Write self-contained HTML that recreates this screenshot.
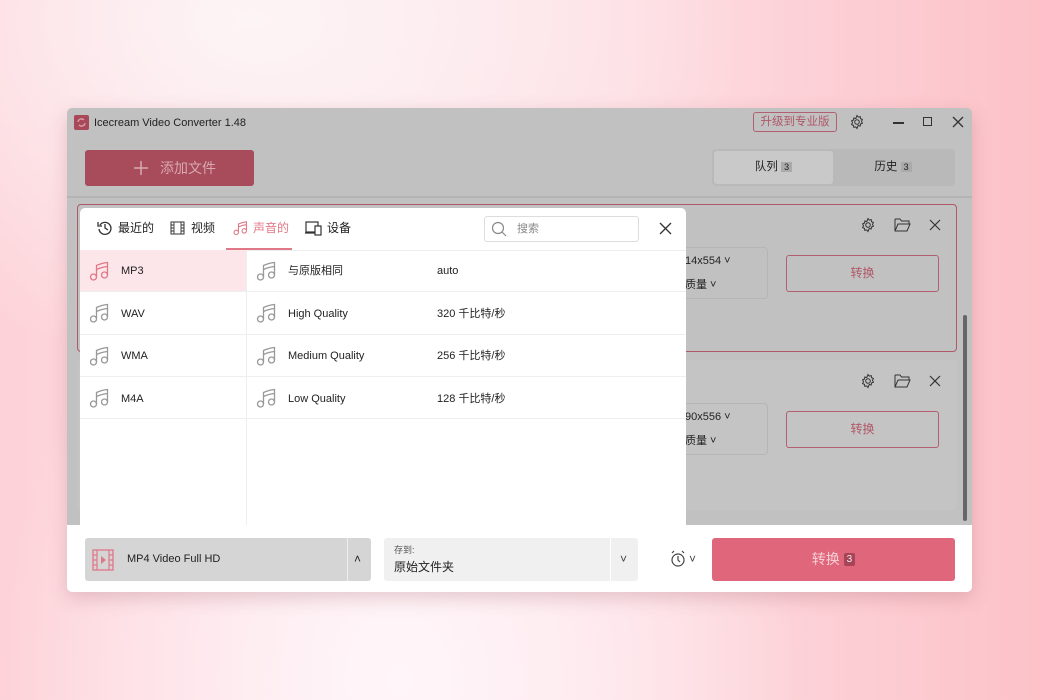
<!DOCTYPE html>
<html><head><meta charset="utf-8"><style>
*{margin:0;padding:0;box-sizing:border-box}
body{width:1040px;height:700px;overflow:hidden;position:relative;font-family:"Liberation Sans","Noto Sans CJK SC",sans-serif;font-size:11px;color:#222;
background:radial-gradient(ellipse 400px 500px at 400px 680px,#fff6fa 0%,rgba(255,246,250,0) 100%),radial-gradient(ellipse 500px 350px at 250px 20px,#fdf4f6 0%,rgba(253,244,246,0) 100%),linear-gradient(90deg,#fdd2d8 0%,#fde4e8 35%,#fddde2 60%,#fcc2c8 100%);}
.a{position:absolute}
.win{left:67px;top:108px;width:905px;height:484px;background:#c1c1c1;border-radius:5px;overflow:hidden;box-shadow:0 6px 18px rgba(150,80,90,.25)}
svg{display:block}
.row{position:absolute;height:42px;border-bottom:1px solid #eee}
.t{position:absolute;height:42px;line-height:42px;font-size:11px;white-space:nowrap}
</style></head><body>
<div class="a win">
 <div class="a" style="left:7px;top:7px;width:15px;height:15px;background:#a84858;border-radius:2px"><svg width="15" height="15"><path d="M4 7a3.5 3.5 0 0 1 6-2M11 8a3.5 3.5 0 0 1-6 2" stroke="#d8a0a8" stroke-width="1.4" fill="none"/></svg></div>
 <div class="a" style="left:27px;top:8px;height:14px;line-height:14px;font-size:11px;color:#222">Icecream Video Converter 1.48</div>
 <div class="a" style="left:686px;top:4px;width:84px;height:20px;border:1px solid #b06070;border-radius:3px;color:#b05868;font-size:11.5px;text-align:center;line-height:18px">升级到专业版</div>
 <svg class="a" style="left:782px;top:6px" width="16" height="16" viewBox="0 0 16 16"><circle cx="8" cy="8" r="2.3" fill="none" stroke="#333"/><path d="M8 1.5l1.2 1.6 2-.5.3 2 1.9.9-.9 1.8.9 1.9-1.9.8-.3 2-2-.5L8 14.5l-1.2-1.6-2 .5-.3-2-1.9-.8.9-1.9-.9-1.8 1.9-.9.3-2 2 .5z" fill="none" stroke="#333"/></svg>
 <div class="a" style="left:826px;top:14px;width:11px;height:1.5px;background:#333"></div>
 <div class="a" style="left:856px;top:9px;width:9px;height:9px;border:1.5px solid #333"></div>
 <svg class="a" style="left:885px;top:8px" width="12" height="12"><path d="M1 1l10 10M11 1L1 11" stroke="#333" stroke-width="1.3"/></svg>
 <div class="a" style="left:18px;top:42px;width:169px;height:36px;background:#a84b5b;border-radius:3px;color:#d8a9b1;font-size:14px;line-height:36px;padding-left:75px">添加文件</div>
 <svg class="a" style="left:66px;top:52px" width="16" height="16"><path d="M8 1v14M1 8h14" stroke="#d8a9b1" stroke-width="1.5"/></svg>
 <div class="a" style="left:645px;top:41px;width:243px;height:37px;background:#b9b9b9;border-radius:4px"></div>
 <div class="a" style="left:647px;top:43px;width:119px;height:33px;background:#c9c9c9;border-radius:3px;text-align:center;line-height:33px;font-size:11.5px">队列 <span style="background:#aaa;padding:0 3px;font-size:9px">3</span></div>
 <div class="a" style="left:766px;top:43px;width:120px;height:33px;text-align:center;line-height:33px;font-size:11.5px">历史 <span style="background:#aaa;padding:0 3px;font-size:9px">3</span></div>
 <div class="a" style="left:0;top:88px;width:905px;height:2px;background:#b4b4b4"></div>
 <div class="a" style="left:10px;top:96px;width:880px;height:148px;border:1.5px solid #b05868;border-radius:4px"></div>
 <div class="a" style="left:10px;top:252px;width:880px;height:150px;background:#c4c4c4;border-radius:4px"></div>
 <div class="a" style="left:595px;top:139px;width:106px;height:52px;border:1px solid #b5b5b5;border-radius:4px"></div>
 <div class="a" style="left:618px;top:145px;line-height:16px;font-size:11px">14x554 ˅</div>
 <div class="a" style="left:618px;top:169px;line-height:16px;font-size:11px">质量 ˅</div>
 <div class="a" style="left:719px;top:147px;width:153px;height:37px;border:1px solid #b06070;border-radius:3px;color:#b05868;text-align:center;line-height:35px;font-size:12px">转换</div>
 <div class="a" style="left:595px;top:295px;width:106px;height:52px;border:1px solid #b5b5b5;border-radius:4px"></div>
 <div class="a" style="left:618px;top:301px;line-height:16px;font-size:11px">90x556 ˅</div>
 <div class="a" style="left:618px;top:325px;line-height:16px;font-size:11px">质量 ˅</div>
 <div class="a" style="left:719px;top:303px;width:153px;height:37px;border:1px solid #b06070;border-radius:3px;color:#b05868;text-align:center;line-height:35px;font-size:12px">转换</div>
 <svg class="a" style="left:793px;top:109px" width="16" height="16" viewBox="0 0 16 16"><circle cx="8" cy="8" r="2.3" fill="none" stroke="#333"/><path d="M8 1.5l1.2 1.6 2-.5.3 2 1.9.9-.9 1.8.9 1.9-1.9.8-.3 2-2-.5L8 14.5l-1.2-1.6-2 .5-.3-2-1.9-.8.9-1.9-.9-1.8 1.9-.9.3-2 2 .5z" fill="none" stroke="#333"/></svg>
 <svg class="a" style="left:827px;top:110px" width="17" height="14"><path d="M1 1h5l1.5 2H15v3M1 1v12h12l3-7H4L1 13" fill="none" stroke="#333"/></svg>
 <svg class="a" style="left:862px;top:111px" width="12" height="12"><path d="M1 1l10 10M11 1L1 11" stroke="#333" stroke-width="1.2"/></svg>
 <svg class="a" style="left:793px;top:265px" width="16" height="16" viewBox="0 0 16 16"><circle cx="8" cy="8" r="2.3" fill="none" stroke="#333"/><path d="M8 1.5l1.2 1.6 2-.5.3 2 1.9.9-.9 1.8.9 1.9-1.9.8-.3 2-2-.5L8 14.5l-1.2-1.6-2 .5-.3-2-1.9-.8.9-1.9-.9-1.8 1.9-.9.3-2 2 .5z" fill="none" stroke="#333"/></svg>
 <svg class="a" style="left:827px;top:266px" width="17" height="14"><path d="M1 1h5l1.5 2H15v3M1 1v12h12l3-7H4L1 13" fill="none" stroke="#333"/></svg>
 <svg class="a" style="left:862px;top:267px" width="12" height="12"><path d="M1 1l10 10M11 1L1 11" stroke="#333" stroke-width="1.2"/></svg>
 <div class="a" style="left:896px;top:207px;width:4px;height:206px;background:#666;border-radius:2px"></div>
 <div class="a" style="left:0;top:417px;width:905px;height:67px;background:#fff"></div>
 <div class="a" style="left:18px;top:430px;width:286px;height:43px;background:#d5d5d5;border-radius:3px"></div>
 <div class="a" style="left:280px;top:430px;width:1px;height:43px;background:#eee"></div>
 <svg class="a" style="left:25px;top:441px" width="22" height="22"><rect x="1" y="1" width="20" height="20" fill="none" stroke="#e07888" stroke-width="1.3"/><path d="M5 1v20M17 1v20M1 6h4M1 11h4M1 16h4M17 6h4M17 11h4M17 16h4" stroke="#e07888" stroke-width="1.2"/><path d="M9 7l5 4-5 4z" fill="#e07888"/></svg>
 <div class="a" style="left:60px;top:430px;height:43px;line-height:43px;font-size:11px">MP4 Video Full HD</div>
 <div class="a" style="left:287px;top:430px;height:43px;line-height:43px;font-size:12px">˄</div>
 <div class="a" style="left:317px;top:430px;width:254px;height:43px;background:#f0f0f0;border-radius:3px"></div>
 <div class="a" style="left:543px;top:430px;width:1px;height:43px;background:#fff"></div>
 <div class="a" style="left:327px;top:436px;line-height:12px;font-size:9px;color:#555">存到:</div>
 <div class="a" style="left:327px;top:451px;line-height:16px;font-size:12px">原始文件夹</div>
 <div class="a" style="left:553px;top:430px;height:43px;line-height:43px;font-size:12px;color:#444">˅</div>
 <svg class="a" style="left:603px;top:442px" width="17" height="18"><circle cx="8" cy="10" r="6" fill="none" stroke="#444" stroke-width="1.2"/><path d="M8 6v4l2 2M2 3l2-2M14 3l-2-2" stroke="#444" stroke-width="1.2" fill="none"/></svg>
 <div class="a" style="left:622px;top:430px;height:43px;line-height:43px;font-size:12px;color:#444">˅</div>
 <div class="a" style="left:645px;top:430px;width:243px;height:43px;background:#e0667c;border-radius:3px;color:#f6d0d6;font-size:14px;text-align:center;line-height:43px">转换 <span style="background:#a84458;color:#eee;font-size:10px;padding:1px 3px;border-radius:2px;vertical-align:2px">3</span></div>
 <div class="a" style="left:13px;top:100px;width:606px;height:317px;background:#fff;border-radius:5px 5px 0 0;overflow:hidden">
  <svg class="a" style="left:17px;top:12px" width="16" height="16"><path d="M3 5a6 6 0 1 1-1 4" fill="none" stroke="#333" stroke-width="1.3"/><path d="M1 2v4h4" fill="none" stroke="#333" stroke-width="1.3"/><path d="M8 4v4l3 2" stroke="#333" stroke-width="1.3" fill="none"/></svg>
  <div class="a" style="left:38px;top:12px;line-height:16px;font-size:12px">最近的</div>
  <svg class="a" style="left:90px;top:13px" width="15" height="14"><rect x="1" y="1" width="13" height="12" fill="none" stroke="#333"/><path d="M4 1v12M11 1v12M1 4h3M1 7h3M1 10h3M11 4h3M11 7h3M11 10h3" stroke="#333" stroke-width=".9"/></svg>
  <div class="a" style="left:111px;top:12px;line-height:16px;font-size:12px">视频</div>
  <svg class="a" style="left:153px;top:12px" width="16" height="16" viewBox="0 0 22 22"><circle cx="4.5" cy="17" r="3" fill="none" stroke="#e07888" stroke-width="1.5"/><circle cx="15.5" cy="15" r="3" fill="none" stroke="#e07888" stroke-width="1.5"/><path d="M7.5 17V5.5Q13 3 18.5 2.5V15M7.5 9.5Q13 7 18.5 6.5" fill="none" stroke="#e07888" stroke-width="1.5"/></svg>
  <div class="a" style="left:173px;top:12px;line-height:16px;font-size:12px;color:#e07888">声音的</div>
  <div class="a" style="left:146px;top:40px;width:66px;height:2px;background:#e07888"></div>
  <svg class="a" style="left:225px;top:13px" width="17" height="15"><rect x="1" y="1" width="12" height="10" fill="none" stroke="#333" stroke-width="1.2"/><rect x="10" y="5" width="6" height="9" fill="#fff" stroke="#333" stroke-width="1.2"/><path d="M0 12h10" stroke="#333" stroke-width="1.2"/></svg>
  <div class="a" style="left:247px;top:12px;line-height:16px;font-size:12px">设备</div>
  <div class="a" style="left:404px;top:8px;width:155px;height:26px;border:1px solid #ddd;border-radius:3px"></div>
  <svg class="a" style="left:411px;top:13px" width="16" height="16"><circle cx="7" cy="7" r="5.5" fill="none" stroke="#888" stroke-width="1.2"/><path d="M11 11l4 4" stroke="#888" stroke-width="1.2"/></svg>
  <div class="a" style="left:437px;top:8px;height:26px;line-height:26px;font-size:11px;color:#888">搜索</div>
  <svg class="a" style="left:579px;top:14px" width="13" height="13"><path d="M1 1l11 11M12 1L1 12" stroke="#333" stroke-width="1.3"/></svg>
  <div class="a" style="left:0;top:42px;width:606px;height:1px;background:#eee"></div>
  <div class="a" style="left:166px;top:42px;width:1px;height:275px;background:#eee"></div>
  <div class="row" style="left:0;top:42px;width:166px;background:#fde6ea"></div>
  <div class="row" style="left:0;top:85px;width:166px"></div>
  <div class="row" style="left:0;top:127px;width:166px"></div>
  <div class="row" style="left:0;top:169px;width:166px"></div>
  <div class="row" style="left:167px;top:42px;width:439px"></div>
  <div class="row" style="left:167px;top:85px;width:439px"></div>
  <div class="row" style="left:167px;top:127px;width:439px"></div>
  <div class="row" style="left:167px;top:169px;width:439px"></div>
  <svg class="a" style="left:9px;top:52px" width="22" height="22"><circle cx="4.5" cy="17" r="3" fill="none" stroke="#e07888" stroke-width="1.3"/><circle cx="15.5" cy="15" r="3" fill="none" stroke="#e07888" stroke-width="1.3"/><path d="M7.5 17V5.5Q13 3 18.5 2.5V15M7.5 9.5Q13 7 18.5 6.5" fill="none" stroke="#e07888" stroke-width="1.3"/></svg>
  <svg class="a" style="left:9px;top:94px" width="22" height="22"><circle cx="4.5" cy="17" r="3" fill="none" stroke="#999" stroke-width="1.3"/><circle cx="15.5" cy="15" r="3" fill="none" stroke="#999" stroke-width="1.3"/><path d="M7.5 17V5.5Q13 3 18.5 2.5V15M7.5 9.5Q13 7 18.5 6.5" fill="none" stroke="#999" stroke-width="1.3"/></svg>
  <svg class="a" style="left:9px;top:137px" width="22" height="22"><circle cx="4.5" cy="17" r="3" fill="none" stroke="#999" stroke-width="1.3"/><circle cx="15.5" cy="15" r="3" fill="none" stroke="#999" stroke-width="1.3"/><path d="M7.5 17V5.5Q13 3 18.5 2.5V15M7.5 9.5Q13 7 18.5 6.5" fill="none" stroke="#999" stroke-width="1.3"/></svg>
  <svg class="a" style="left:9px;top:179px" width="22" height="22"><circle cx="4.5" cy="17" r="3" fill="none" stroke="#999" stroke-width="1.3"/><circle cx="15.5" cy="15" r="3" fill="none" stroke="#999" stroke-width="1.3"/><path d="M7.5 17V5.5Q13 3 18.5 2.5V15M7.5 9.5Q13 7 18.5 6.5" fill="none" stroke="#999" stroke-width="1.3"/></svg>
  <svg class="a" style="left:176px;top:52px" width="22" height="22"><circle cx="4.5" cy="17" r="3" fill="none" stroke="#999" stroke-width="1.3"/><circle cx="15.5" cy="15" r="3" fill="none" stroke="#999" stroke-width="1.3"/><path d="M7.5 17V5.5Q13 3 18.5 2.5V15M7.5 9.5Q13 7 18.5 6.5" fill="none" stroke="#999" stroke-width="1.3"/></svg>
  <svg class="a" style="left:176px;top:94px" width="22" height="22"><circle cx="4.5" cy="17" r="3" fill="none" stroke="#999" stroke-width="1.3"/><circle cx="15.5" cy="15" r="3" fill="none" stroke="#999" stroke-width="1.3"/><path d="M7.5 17V5.5Q13 3 18.5 2.5V15M7.5 9.5Q13 7 18.5 6.5" fill="none" stroke="#999" stroke-width="1.3"/></svg>
  <svg class="a" style="left:176px;top:137px" width="22" height="22"><circle cx="4.5" cy="17" r="3" fill="none" stroke="#999" stroke-width="1.3"/><circle cx="15.5" cy="15" r="3" fill="none" stroke="#999" stroke-width="1.3"/><path d="M7.5 17V5.5Q13 3 18.5 2.5V15M7.5 9.5Q13 7 18.5 6.5" fill="none" stroke="#999" stroke-width="1.3"/></svg>
  <svg class="a" style="left:176px;top:179px" width="22" height="22"><circle cx="4.5" cy="17" r="3" fill="none" stroke="#999" stroke-width="1.3"/><circle cx="15.5" cy="15" r="3" fill="none" stroke="#999" stroke-width="1.3"/><path d="M7.5 17V5.5Q13 3 18.5 2.5V15M7.5 9.5Q13 7 18.5 6.5" fill="none" stroke="#999" stroke-width="1.3"/></svg>
  <div class="t" style="left:41px;top:42px">MP3</div>
  <div class="t" style="left:41px;top:85px">WAV</div>
  <div class="t" style="left:41px;top:127px">WMA</div>
  <div class="t" style="left:41px;top:170px">M4A</div>
  <div class="t" style="left:208px;top:42px">与原版相同</div>
  <div class="t" style="left:208px;top:85px">High Quality</div>
  <div class="t" style="left:208px;top:127px">Medium Quality</div>
  <div class="t" style="left:208px;top:170px">Low Quality</div>
  <div class="t" style="left:357px;top:42px">auto</div>
  <div class="t" style="left:357px;top:85px">320 千比特/秒</div>
  <div class="t" style="left:357px;top:127px">256 千比特/秒</div>
  <div class="t" style="left:357px;top:170px">128 千比特/秒</div>
 </div>
</div>
</body></html>
